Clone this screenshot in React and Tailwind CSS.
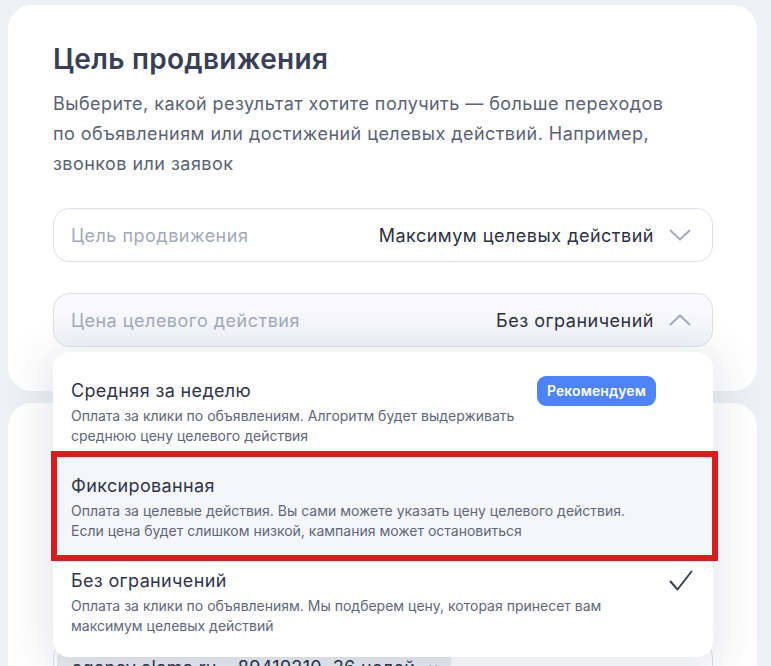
import React from 'react'

const Chevron = ({ up }) => (
  <svg width="22" height="12" viewBox="0 0 22 12" fill="none" className="ml-[15px] shrink-0">
    <path
      d={up ? 'M1.5 10.5 L11 1.5 L20.5 10.5' : 'M1.5 1.5 L11 10.5 L20.5 1.5'}
      stroke="#a2a8b9"
      strokeWidth="1.8"
      strokeLinecap="round"
      strokeLinejoin="round"
    />
  </svg>
)

const Check = () => (
  <svg width="24" height="22" viewBox="0 0 24 22" fill="none" className="shrink-0">
    <path d="M1.5 11.5 L8.5 19.5 L22.5 1.5" stroke="#394056" strokeWidth="2" strokeLinecap="round" strokeLinejoin="round" />
  </svg>
)

const options = [
  {
    title: 'Средняя за неделю',
    text: ['Оплата за клики по объявлениям. Алгоритм будет выдерживать', 'среднюю цену целевого действия'],
    badge: true,
  },
  {
    title: 'Фиксированная',
    text: ['Оплата за целевые действия. Вы сами можете указать цену целевого действия.', 'Если цена будет слишком низкой, кампания может остановиться'],
    marked: true,
  },
  {
    title: 'Без ограничений',
    text: ['Оплата за клики по объявлениям. Мы подберем цену, которая принесет вам', 'максимум целевых действий'],
    checked: true,
  },
]

export default function App() {
  return (
    <div className="h-[666px] overflow-hidden bg-[#edf0f5] pl-2 pr-[14px] pt-[5px] font-['Inter',sans-serif]">
      {/* Goal card */}
      <div className="rounded-[24px] bg-white pl-[45px] pr-[44px] pt-[36px] pb-[44px]">
        <h1 className="text-[28px] leading-[36px] font-semibold text-[#394056] tracking-[0.3px]">Цель продвижения</h1>
        <p className="mt-3 text-[18px] leading-[30px] text-[#5b6275] tracking-[0.45px]">
          Выберите, какой результат хотите получить — больше переходов
          <br />
          по объявлениям или достижений целевых действий. Например,
          <br />
          звонков или заявок
        </p>

        <div className="mt-[29px] flex h-[54px] items-center rounded-[16px] border border-[#dde0e8] pl-[17px] pr-[21px] text-[18px] tracking-[0.5px]">
          <span className="text-[#a3a9ba]">Цель продвижения</span>
          <span className="ml-auto text-[#2c3142]">Максимум целевых действий</span>
          <Chevron />
        </div>

        <div className="relative mt-[31px]">
          <div className="flex h-[54px] items-center rounded-[16px] border border-[#dde0e8] bg-gradient-to-b from-[#fbfbfd] to-[#f3f4f8] pl-[17px] pr-[21px] text-[18px] tracking-[0.5px]">
            <span className="text-[#a3a9ba]">Цена целевого действия</span>
            <span className="ml-auto text-[#2c3142]">Без ограничений</span>
            <Chevron up />
          </div>

          {/* Dropdown */}
          <div className="absolute left-0 right-0 top-[59px] z-10 rounded-[16px] bg-white pt-[9px] pb-[8px] shadow-[0_6px_40px_10px_rgba(40,52,90,0.10)]">
            {options.map((o) => (
              <div key={o.title} className="relative pl-[18px] pr-[20px] pt-[15px] pb-[13px]">
                {o.marked && (
                  <span className="pointer-events-none absolute -left-[2px] -right-[5px] -top-[8px] -bottom-[7px] border-[6px] border-[#de1b1b] bg-[#f5f6fa]" />
                )}
                <div className="relative flex items-center">
                  <span className="text-[18px] leading-[24px] text-[#2f3547] tracking-[0.35px]">{o.title}</span>
                  {o.badge && (
                    <span className="ml-auto mr-[37px] rounded-[9px] bg-[#4d83fb] px-[10px] py-[5px] text-[14px] leading-[20px] font-semibold text-white tracking-[0.1px]">
                      Рекомендуем
                    </span>
                  )}
                  {o.checked && (
                    <span className="ml-auto">
                      <Check />
                    </span>
                  )}
                </div>
                <p className={`relative text-[14px] leading-[20px] text-[#5f6679] ${o.badge ? '' : 'mt-[3px]'}`}>
                  {o.text[0]}
                  <br />
                  {o.text[1]}
                </p>
              </div>
            ))}
          </div>
        </div>
      </div>

      {/* Goals card */}
      <div className="mt-3 rounded-[24px] bg-white pl-[45px] pr-[44px] pt-[36px] pb-8">
        <h2 className="text-[28px] leading-[36px] font-semibold text-[#394056]">Цели</h2>
        <p className="mt-3 text-[18px] leading-[30px] text-[#5b6275]">
          Выберите цели из счётчика Метрики
        </p>
        <div className="mt-[124px] rounded-[16px] border border-[#dde0e8] px-[3px] pt-[8px] pb-2">
          <span className="inline-flex items-center gap-3 rounded-[8px] bg-[#e8ebf0] pl-[15px] pr-[12px] py-[5px] text-[18px] leading-[26px] tracking-[0.3px] text-[#2c3142]">
            agency.elama.ru • 89419210&nbsp;&nbsp;36 целей
            <span className="text-[#9aa1b3]">×</span>
          </span>
        </div>
      </div>
    </div>
  )
}
